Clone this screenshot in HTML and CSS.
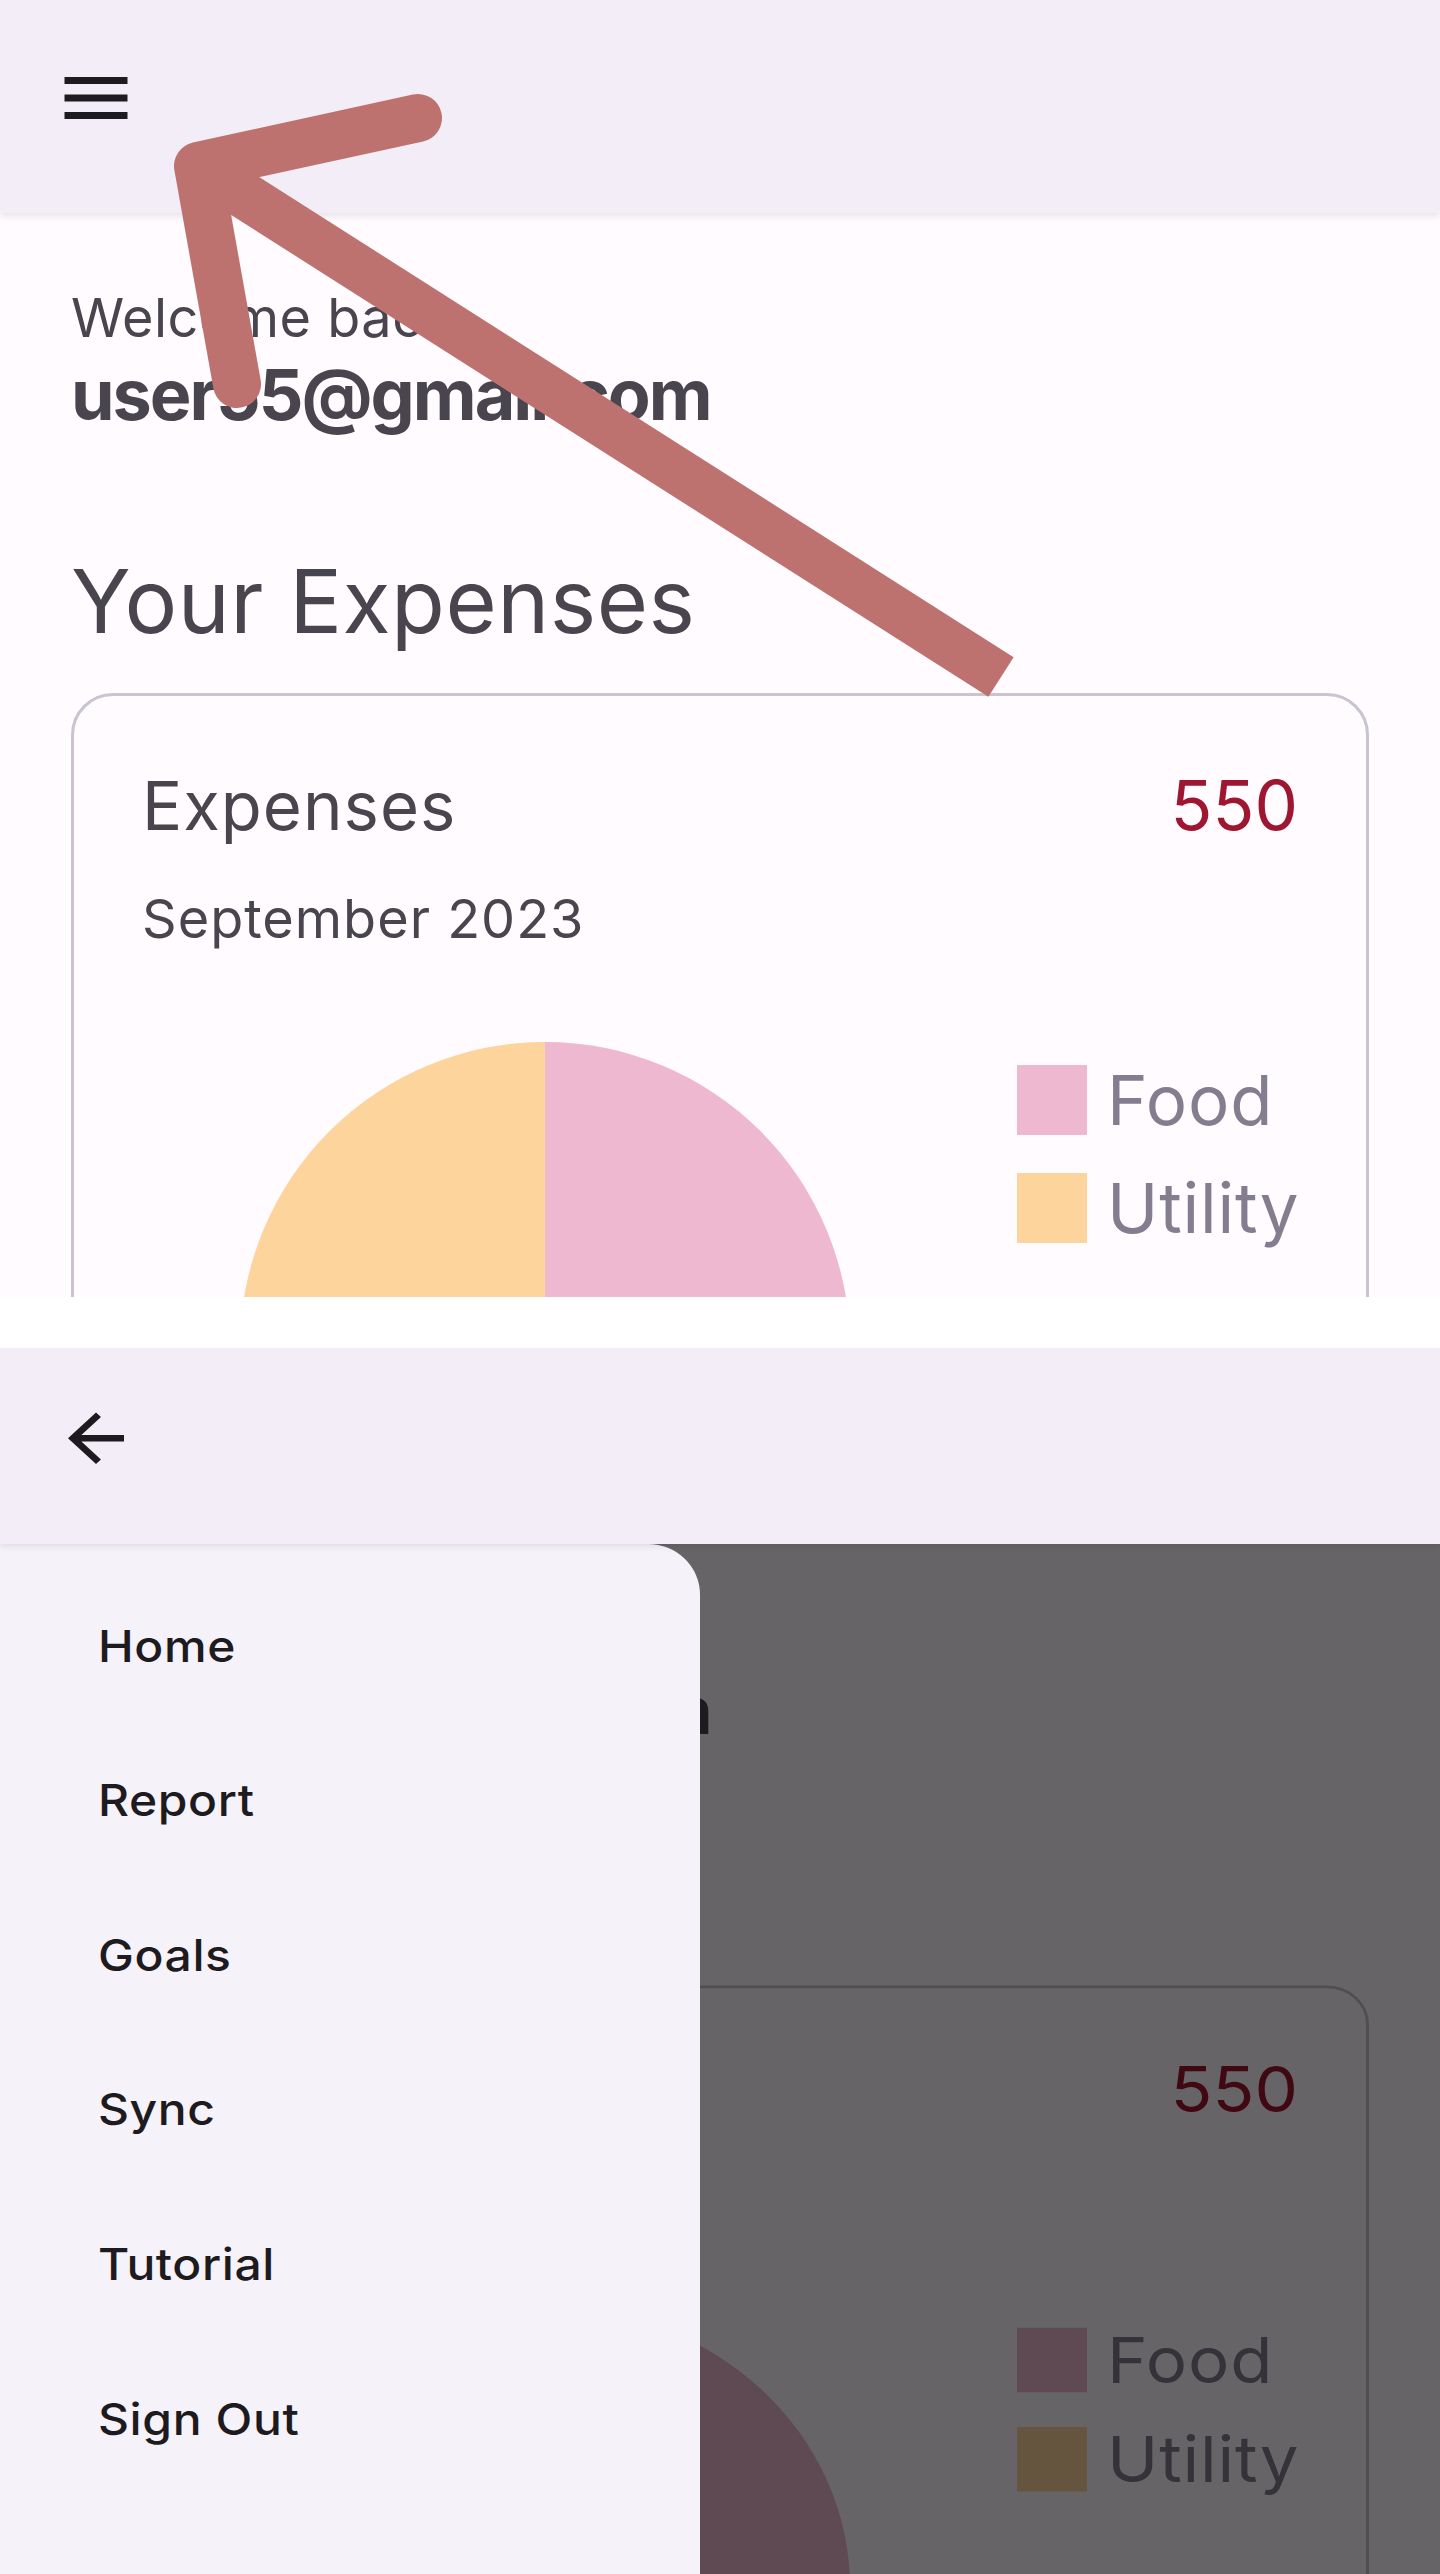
FILE: index.html
```html
<!DOCTYPE html>
<html lang="en">
<head>
<meta charset="utf-8">
<title>Expenses</title>
<link rel="stylesheet" href="styles.css">
</head>
<body>
<div class="page">
  <section class="screen screen-main">
    <header class="appbar">
      <span class="icon-btn">
        <svg viewBox="0 0 24 24" width="84" height="84"><path d="M3 18h18v-2H3v2zm0-5h18v-2H3v2zm0-7v2h18V6H3z" fill="#1D1B20"/></svg>
      </span>
    </header>
    <main class="content">
      <p class="welcome">Welcome back,</p>
      <p class="email">user55@gmail.com</p>
      <h1 class="title">Your Expenses</h1>
      <article class="card">
        <div class="card-head">
          <h2 class="card-title">Expenses</h2>
          <span class="amount">550</span>
        </div>
        <p class="period">September 2023</p>
        <div class="chart">
          <div class="pie"></div>
          <ul class="legend">
            <li><span class="swatch food"></span>Food</li>
            <li><span class="swatch utility"></span>Utility</li>
          </ul>
        </div>
      </article>
    </main>
    <svg class="annotation" viewBox="0 0 1440 1297" width="1440" height="1297">
      <path d="M198 166 L1001 677" fill="none" stroke="#BD7270" stroke-width="47" stroke-linecap="butt"/>
      <path d="M418 118 L198 166 L237 384" fill="none" stroke="#BD7270" stroke-width="48" stroke-linecap="round" stroke-linejoin="round"/>
    </svg>
  </section>

  <div class="gap"></div>

  <section class="screen-frame">
    <div class="screen screen-drawer">
      <header class="appbar">
        <span class="icon-btn">
          <svg viewBox="0 0 24 24" width="84" height="84"><path d="M20 11H7.83l5.59-5.59L12 4l-8 8 8 8 1.41-1.41L7.83 13H20v-2z" fill="#1D1B20"/></svg>
        </span>
      </header>
      <main class="content">
        <p class="welcome covered">Welcome back,</p>
        <p class="email">user55@gmail.com</p>
        <h1 class="title covered">Your Expenses</h1>
        <article class="card">
          <div class="card-head">
            <h2 class="card-title covered">Expenses</h2>
            <span class="amount">550</span>
          </div>
          <p class="period covered">September 2023</p>
          <div class="chart">
            <div class="pie"></div>
            <ul class="legend">
              <li><span class="swatch food"></span>Food</li>
              <li><span class="swatch utility"></span>Utility</li>
            </ul>
          </div>
        </article>
      </main>
      <div class="scrim"></div>
      <nav class="drawer">
        <ul class="menu">
          <li>Home</li>
          <li>Report</li>
          <li>Goals</li>
          <li>Sync</li>
          <li>Tutorial</li>
          <li>Sign Out</li>
        </ul>
      </nav>
    </div>
  </section>
</div>
</body>
</html>
```

FILE: styles.css
```css
* { box-sizing: border-box; }

html, body {
  margin: 0;
  padding: 0;
  background: #ffffff;
}

body {
  width: 1440px;
  font-family: "Inter", "DejaVu Sans", sans-serif;
  color: #49454F;
}

.page {
  width: 1440px;
}

.screen {
  position: relative;
  overflow: hidden;
  background: #FFFBFE;
}

.screen-main {
  height: 1297px;
}

.gap {
  height: 51px;
  background: #ffffff;
}

.screen-frame {
  height: 1226px;
  overflow: hidden;
}

.screen-drawer {
  height: 1333px;
  transform: scaleY(0.92);
  transform-origin: top left;
}

.appbar {
  position: relative;
  z-index: 3;
  height: 213px;
  background: #F2EDF6;
  display: flex;
  align-items: flex-start;
  padding: 56px 0 0 54px;
  box-shadow: 0 3px 7px rgba(0, 0, 0, 0.10);
}

.icon-btn {
  display: block;
  width: 84px;
  height: 84px;
}

.icon-btn svg {
  display: block;
}

.content {
  padding: 0 71px;
}

.welcome {
  margin: 78px 0 0;
  font-size: 54px;
  line-height: 54px;
  font-weight: 400;
  letter-spacing: 0.5px;
  white-space: nowrap;
}

.email {
  margin: 15px 0 0;
  font-size: 70px;
  line-height: 70px;
  font-weight: 700;
  letter-spacing: -2px;
  white-space: nowrap;
}

.title {
  margin: 127px 0 0;
  font-size: 88px;
  line-height: 88px;
  font-weight: 400;
  letter-spacing: 0.5px;
  white-space: nowrap;
}

.covered {
  visibility: hidden;
}

.card {
  margin-top: 48px;
  height: 1100px;
  border: 3px solid #CAC4D0;
  border-radius: 42px;
  padding: 75px 68px 0;
}

.card-head {
  display: flex;
  justify-content: space-between;
  align-items: baseline;
}

.card-title {
  margin: 0;
  font-size: 67px;
  line-height: 67px;
  font-weight: 400;
  letter-spacing: 1px;
}

.amount {
  font-size: 69px;
  line-height: 69px;
  color: #9E1630;
}

.period {
  margin: 52px 0 0;
  font-size: 54px;
  line-height: 54px;
  letter-spacing: 1px;
}

.chart {
  display: flex;
  align-items: flex-start;
  margin-top: 96px;
}

.pie {
  flex: none;
  width: 610px;
  height: 610px;
  margin-left: 98px;
  border-radius: 50%;
  background: linear-gradient(90deg, #FDD49C 50%, #EEB8D0 50%);
}

.legend {
  list-style: none;
  margin: 23px 0 0 auto;
  padding: 0;
  width: 281px;
  display: flex;
  flex-direction: column;
  gap: 38px;
}

.legend li {
  display: flex;
  align-items: center;
  gap: 20px;
  height: 70px;
  line-height: 70px;
  font-size: 69px;
  color: #847D8F;
  letter-spacing: 0.8px;
  white-space: nowrap;
}

.swatch {
  flex: none;
  width: 70px;
  height: 70px;
}

.swatch.food { background: #EEB8D0; }
.swatch.utility { background: #FDD49C; }

.annotation {
  position: absolute;
  top: 0;
  left: 0;
  z-index: 5;
  pointer-events: none;
}

.scrim {
  position: absolute;
  top: 213px;
  left: 0;
  right: 0;
  bottom: 0;
  z-index: 1;
  background: rgba(0, 0, 0, 0.6);
}

.drawer {
  position: absolute;
  top: 213px;
  left: 0;
  bottom: 0;
  width: 700px;
  z-index: 2;
  background: #F6F2F9;
  border-top-right-radius: 52px 55px;
  padding-top: 27px;
}

.menu {
  list-style: none;
  margin: 0;
  padding: 0;
}

.menu li {
  height: 168px;
  line-height: 168px;
  padding-left: 98px;
  font-size: 48px;
  font-weight: 500;
  letter-spacing: 0.6px;
  color: #1D1B20;
  white-space: nowrap;
}
```
